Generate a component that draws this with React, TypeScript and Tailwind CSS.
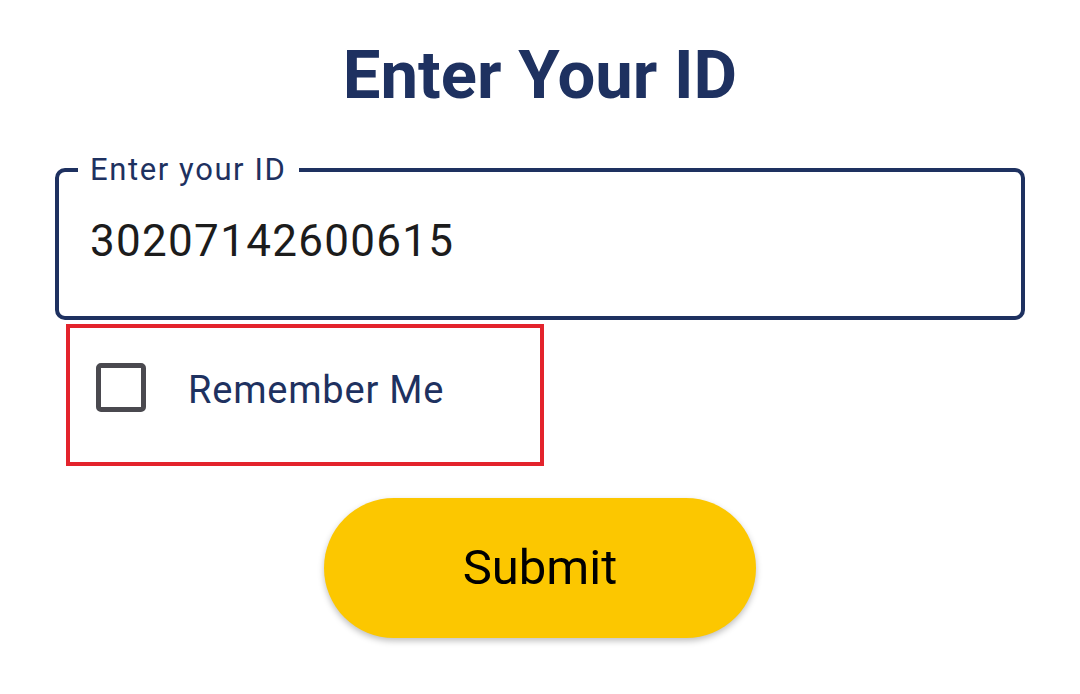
import React from "react";

export default function App() {
  return (
    <div
      className="w-[1080px] h-[694px] bg-white flex flex-col items-center"
      style={{ fontFamily: "Roboto, 'Noto Sans', sans-serif" }}
    >
      <h1 className="mt-[36px] text-[67px] leading-[78px] font-bold text-[#1e3160]">
        Enter Your ID
      </h1>
      <div className="self-stretch px-[55px] mt-[54px]">
        <div className="relative h-[152px] border-[4px] border-[#1e3160] rounded-[10px] flex items-center px-[31px]">
          <span className="absolute left-[19px] -top-[20px] bg-white px-[12px] text-[31px] leading-[36px] text-[#1e3160] tracking-[1.6px]">
            Enter your ID
          </span>
          <span className="text-[44px] text-[#1c1c1c] tracking-[1.3px] -mt-[6px]">
            30207142600615
          </span>
        </div>
      </div>
      <div className="self-start ml-[66px] mt-[4px] w-[478px] h-[142px] border-[4px] border-[#e3232c] flex items-center">
        <div className="ml-[26px] w-[50px] h-[49px] border-[5px] border-[#4a494f] rounded-[5px] -mt-[16px]" />
        <span className="ml-[42px] text-[38px] text-[#1e3160] tracking-[0.8px] -mt-[10px]">
          Remember Me
        </span>
      </div>
      <button className="mt-[32px] w-[432px] h-[140px] rounded-full bg-[#fcc700] shadow-[0_3px_6px_rgba(0,0,0,0.25)] text-[49px] text-black">
        Submit
      </button>
    </div>
  );
}
